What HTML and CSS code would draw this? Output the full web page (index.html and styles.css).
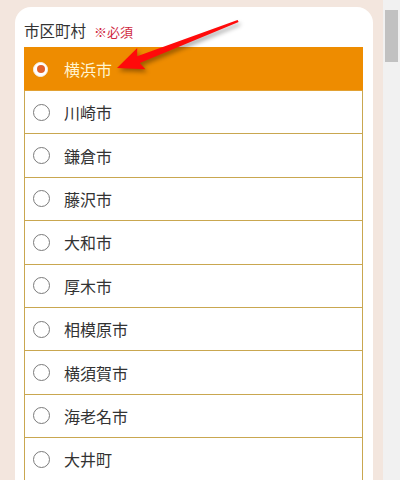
FILE: index.html
```html
<!DOCTYPE html>
<html lang="ja">
<head>
<meta charset="utf-8">
<link rel="stylesheet" href="styles.css">
</head>
<body>
<div class="page">
  <div class="main">
    <div class="card">
      <div class="label">市区町村<span class="req">※必須</span></div>
      <ul class="list">
        <li class="row selected"><span class="radio"><span class="dot"></span></span><span class="name">横浜市</span></li>
        <li class="row"><span class="radio"></span><span class="name">川崎市</span></li>
        <li class="row"><span class="radio"></span><span class="name">鎌倉市</span></li>
        <li class="row"><span class="radio"></span><span class="name">藤沢市</span></li>
        <li class="row"><span class="radio"></span><span class="name">大和市</span></li>
        <li class="row"><span class="radio"></span><span class="name">厚木市</span></li>
        <li class="row"><span class="radio"></span><span class="name">相模原市</span></li>
        <li class="row"><span class="radio"></span><span class="name">横須賀市</span></li>
        <li class="row"><span class="radio"></span><span class="name">海老名市</span></li>
        <li class="row"><span class="radio"></span><span class="name">大井町</span></li>
      </ul>
    </div>
  </div>
  <div class="scrollbar"><div class="thumb"></div></div>
  <svg class="arrow" width="400" height="100" viewBox="0 0 400 100">
    <polygon points="117,68 137.2,48 137.2,56.2 237.6,20 238.6,22 139.8,63 145.4,69.2" fill="#ff0a0a"/>
  </svg>
</div>
</body>
</html>
```

FILE: styles.css
```css
html, body {
  margin: 0;
  padding: 0;
}
body {
  font-family: "Noto Sans CJK JP", "Noto Sans", sans-serif;
  color: #333;
}
.page {
  position: relative;
  display: flex;
  width: 400px;
  height: 480px;
  overflow: hidden;
}
.main {
  flex: 1;
  background: #f3e6de;
  padding: 7px 10px 0 15px;
}
.card {
  background: #fff;
  border-radius: 16px 16px 0 0;
  padding: 12px 10px 0 9px;
  height: 600px;
}
.label {
  font-size: 15.5px;
  line-height: 22px;
  height: 22px;
  margin-bottom: 6px;
  color: #333;
}
.req {
  color: #cf2740;
  font-size: 13px;
  margin-left: 8px;
}
.list {
  list-style: none;
  margin: 0;
  padding: 0;
  border: 1px solid #c9a750;
  border-bottom: none;
}
.row {
  display: flex;
  align-items: center;
  box-sizing: border-box;
  height: 43.4px;
  border-bottom: 1px solid #c9a750;
  font-size: 16px;
  color: #333;
}
.radio {
  box-sizing: border-box;
  width: 17px;
  height: 17px;
  border: 1px solid #7b7b7b;
  border-radius: 50%;
  margin-left: 8px;
  margin-right: 14px;
  background: #fff;
  display: flex;
  align-items: center;
  justify-content: center;
}
.selected {
  background: #ee8c00;
  border-bottom-color: #e2a133;
  margin: -1px -1px 0 -1px;
  padding: 1px 1px 0 1px;
  height: 44px;
}
.selected .name {
  color: #fff4d0;
}
.selected .radio {
  width: 15px;
  height: 15px;
  margin-left: 8px;
  margin-right: 16px;
  border: 1px solid #f6f0e6;
  background: #fff;
}
.dot {
  width: 8px;
  height: 8px;
  border-radius: 50%;
  background: #e2622c;
}
.scrollbar {
  width: 17px;
  background: #f1f1f1;
}
.thumb {
  width: 13px;
  height: 52px;
  margin: 10px 0 0 2px;
  background: #c1c1c1;
}
.arrow {
  position: absolute;
  left: 0;
  top: 0;
  filter: drop-shadow(2px 3px 2px rgba(0,0,0,0.35));
}
```
